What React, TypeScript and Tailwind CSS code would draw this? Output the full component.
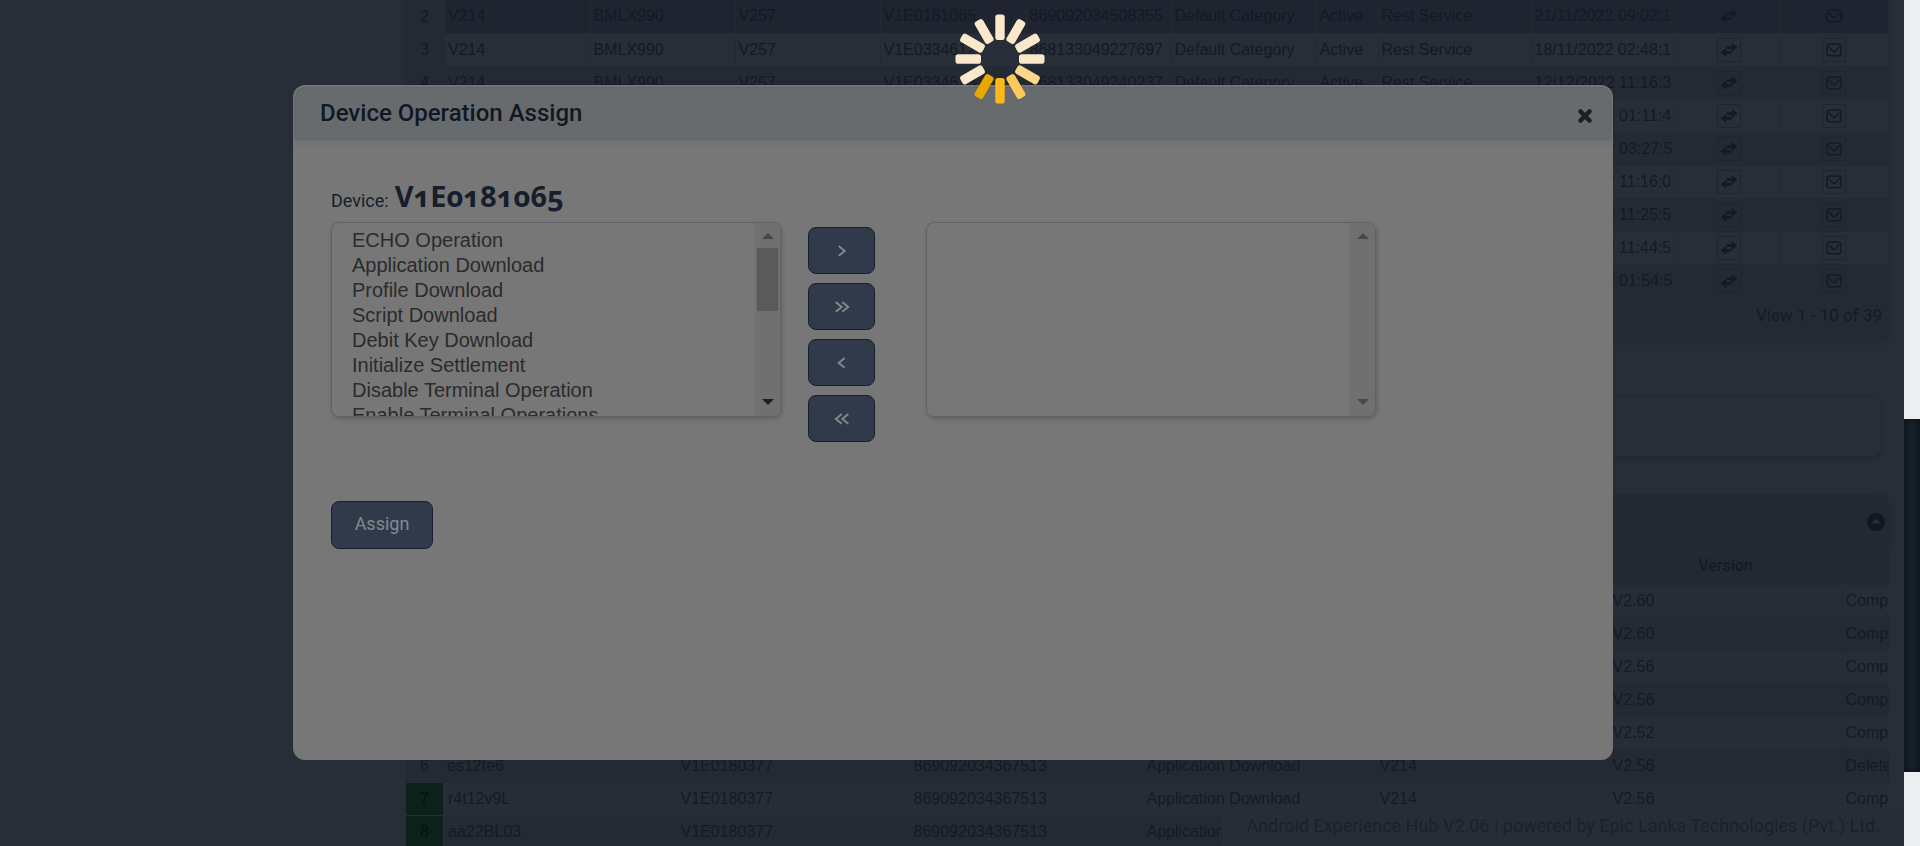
import React from "react";

const deviceRows = [
  { n: 2, imei: "869092034508355", serial: "V1E0181065", date: "21/11/2022 09:02:1", selected: true },
  { n: 3, imei: "868133049227697", serial: "V1E0334612", date: "18/11/2022 02:48:1", selected: false },
  { n: 4, imei: "868133049240237", serial: "V1E0334613", date: "12/12/2022 11:16:3", selected: false },
  { n: 5, imei: "868133049240239", serial: "V1E0334614", date: "12/12/2022 01:11:4", selected: false },
  { n: 6, imei: "868133049240241", serial: "V1E0334615", date: "12/12/2022 03:27:5", selected: false },
  { n: 7, imei: "868133049240243", serial: "V1E0334616", date: "12/12/2022 11:16:0", selected: false },
  { n: 8, imei: "868133049240245", serial: "V1E0334617", date: "12/12/2022 11:25:5", selected: false },
  { n: 9, imei: "868133049240247", serial: "V1E0334618", date: "12/12/2022 11:44:5", selected: false },
  { n: 10, imei: "868133049240249", serial: "V1E0334619", date: "12/12/2022 01:54:5", selected: false },
];

const operationRows = [
  { n: 1, id: "ab10te1", version: "V2.60", status: "Completed" },
  { n: 2, id: "ab11te2", version: "V2.60", status: "Completed" },
  { n: 3, id: "cd12te3", version: "V2.56", status: "Completed" },
  { n: 4, id: "cd12te4", version: "V2.56", status: "Completed" },
  { n: 5, id: "es12te5", version: "V2.52", status: "Completed" },
  { n: 6, id: "es12te6", version: "V2.56", status: "Deleted" },
  { n: 7, id: "r4t12v9L", version: "V2.56", status: "Completed" },
  { n: 8, id: "aa22BL03", version: "V2.56", status: "Completed" },
];

const operations = [
  "ECHO Operation",
  "Application Download",
  "Profile Download",
  "Script Download",
  "Debit Key Download",
  "Initialize Settlement",
  "Disable Terminal Operation",
  "Enable Terminal Operations",
];

function SwapIcon() {
  return (
    <svg viewBox="0 0 18 14" className="h-[14px] w-[18px] shrink-0" fill="currentColor" aria-hidden="true">
      <path d="M6.500 3.200h5.200V.3L17.600 4.600 11.700 9V6H6.500zM11.500 7.900v2.900H6.300v2.900L.4 9.300 6.300 5v2.900z" />
    </svg>
  );
}

function MailIcon() {
  return (
    <svg viewBox="0 0 16 14" className="h-[14px] w-4 shrink-0" fill="none" stroke="currentColor" strokeWidth="1.500" aria-hidden="true">
      <rect x="1" y="1" width="14" height="11.800" rx="2.500" />
      <path d="M2.600 3.400L7 8.200q1 1 2 0l4.400-4.800" />
    </svg>
  );
}

function IconButton({ label, framed, children }: { label: string; framed: boolean; children: React.ReactNode }) {
  return (
    <button
      type="button"
      aria-label={label}
      className={
        framed
          ? "mx-auto flex h-6 w-6 items-center justify-center border border-[#1f2530]"
          : "mx-auto flex h-6 w-6 items-center justify-center"
      }
    >
      {children}
    </button>
  );
}

function DeviceTable() {
  const cell = "overflow-hidden whitespace-nowrap border-r border-b border-[#232a34] px-[3px]";
  return (
    <table className="w-full table-fixed border-collapse text-base leading-6">
      <colgroup>
        <col className="w-[41px]" />
        <col className="w-[145px]" />
        <col className="w-[145px]" />
        <col className="w-[145px]" />
        <col className="w-[146px]" />
        <col className="w-[145px]" />
        <col className="w-[145px]" />
        <col className="w-[62px]" />
        <col className="w-[153px]" />
        <col className="w-[146px]" />
        <col className="w-[103px]" />
        <col />
      </colgroup>
      <tbody>
        {deviceRows.map((r) => (
          <tr
            key={r.n}
            className={r.selected ? "h-[33px] bg-[#1f2430]" : r.n % 2 ? "h-[33px] bg-[#272e37]" : "h-[33px] bg-[#242a34]"}
          >
            <td className="bg-[#242a34] text-center">{r.n}</td>
            <td className={cell}>V214</td>
            <td className={cell}>BMLX990</td>
            <td className={cell}>V257</td>
            <td className={cell}>{r.serial}</td>
            <td className={cell}>{r.imei}</td>
            <td className={cell}>Default Category</td>
            <td className={cell}>Active</td>
            <td className={cell}>Rest Service</td>
            <td className={cell}>{r.date}</td>
            <td className={cell}>
              <IconButton label="Assign operation" framed={!r.selected}>
                <SwapIcon />
              </IconButton>
            </td>
            <td className={cell}>
              <IconButton label="Send message" framed={!r.selected}>
                <MailIcon />
              </IconButton>
            </td>
          </tr>
        ))}
      </tbody>
    </table>
  );
}

function OperationTable() {
  const cell = "overflow-hidden whitespace-nowrap border-r border-b border-[#232a34] px-[3px]";
  return (
    <table className="w-full table-fixed border-collapse text-base leading-6">
      <colgroup>
        <col className="w-[39px]" />
        <col className="w-[233px]" />
        <col className="w-[233px]" />
        <col className="w-[233px]" />
        <col className="w-[233px]" />
        <col className="w-[233px]" />
        <col className="w-[233px]" />
        <col />
      </colgroup>
      <thead className="font-['Roboto',sans-serif]">
        <tr className="h-[38px] bg-[#232933]">
          <th />
          <th className="font-medium">ID</th>
          <th className="font-medium">Serial</th>
          <th className="font-medium">IMEI</th>
          <th className="font-medium">Operation</th>
          <th className="font-medium">Model</th>
          <th className="font-medium">Version</th>
          <th />
        </tr>
      </thead>
      <tbody>
        {operationRows.map((r) => (
          <tr key={r.n} className={r.n % 2 ? "h-[33px] bg-[#272d37]" : "h-[33px] bg-[#242a34]"}>
            <td
              className={
                r.n > 6
                  ? "border-x-2 border-b border-[#272d37] bg-[#0c2119] text-center text-[#06120f]"
                  : "bg-[#242a34] text-center"
              }
            >
              {r.n}
            </td>
            <td className={cell}>{r.id}</td>
            <td className={cell}>V1E0180377</td>
            <td className={cell}>869092034367513</td>
            <td className={cell}>Application Download</td>
            <td className={cell}>V214</td>
            <td className={cell}>{r.version}</td>
            <td className="overflow-hidden whitespace-nowrap border-b border-[#232a34] px-[3px]">{r.status}</td>
          </tr>
        ))}
      </tbody>
    </table>
  );
}

function ListBox({ label, items }: { label: string; items: string[] }) {
  const active = items.length > 0;
  return (
    <div className="flex h-[195px] w-[450px] overflow-hidden rounded-lg border border-[#5c636c] shadow-[1px_2px_4px_rgba(0,0,0,0.2)]">
      <select
        multiple
        aria-label={label}
        className="h-full min-w-0 flex-1 overflow-hidden bg-transparent px-5 py-[6px] text-xl text-[#2b2b2b] outline-none"
      >
        {items.map((o) => (
          <option key={o} className="h-[25px] p-0 leading-[25px]">
            {o}
          </option>
        ))}
      </select>
      <div className="flex w-[25px] flex-col items-center bg-[#707070] pt-[10px] pb-[11px]">
        <svg viewBox="0 0 12 6" className="h-[6px] w-3 fill-[#484848]" aria-hidden="true">
          <path d="M0 6L6 0l6 6z" />
        </svg>
        {active ? <div className="mt-[9px] h-[63px] w-[21px] bg-[#5a5a5a]" /> : null}
        <svg
          viewBox="0 0 12 6"
          className={active ? "mt-auto h-[6px] w-3 fill-[#1f1f1f]" : "mt-auto h-[6px] w-3 fill-[#484848]"}
          aria-hidden="true"
        >
          <path d="M0 0h12L6 6z" />
        </svg>
      </div>
    </div>
  );
}

function MoveButton({ label, d }: { label: string; d: string }) {
  return (
    <button
      type="button"
      aria-label={label}
      className="flex h-[47px] w-[67px] items-center justify-center rounded-lg border border-[#16202e] bg-[#303a4a] text-[#84878b]"
    >
      <svg viewBox="0 0 16 12" className="h-3 w-4" fill="none" stroke="currentColor" strokeWidth="1.900" aria-hidden="true">
        <path d={d} />
      </svg>
    </button>
  );
}

function Modal() {
  return (
    <section
      role="dialog"
      aria-label="Device Operation Assign"
      className="flex h-[675px] w-[1320px] flex-col rounded-xl bg-[#777777] p-[2px] font-['Roboto',sans-serif]"
    >
      <header className="flex h-[52px] items-center justify-between rounded-t-[10px] border border-[#626669] bg-[#676b6e] pr-[17px] pl-6 shadow-[0_2px_6px_rgba(0,0,0,0.15)]">
        <h2 className="text-2xl font-medium text-[#111823]">Device Operation Assign</h2>
        <button type="button" aria-label="Close" className="mt-[6px] text-[#1f1f1f]">
          <svg viewBox="0 0 16 16" className="h-4 w-4" aria-hidden="true">
            <path
              d="M3.400 3.400l9.200 9.200M12.600 3.400l-9.200 9.200"
              stroke="currentColor"
              strokeWidth="4.400"
              strokeLinecap="round"
            />
          </svg>
        </button>
      </header>
      <div className="px-9 pt-[35px]">
        <p className="flex h-12 items-baseline gap-[6px] text-[#161e2b]">
          <span className="text-lg">Device:</span>
          <strong className="font-['Open_Sans',sans-serif] text-[29px] font-bold oldstyle-nums">V1E0181065</strong>
        </p>
        <div className="flex items-start font-['Liberation_Sans',Arial,sans-serif]">
          <ListBox label="Available operations" items={operations} />
          <div className="mr-[51px] ml-[27px] flex flex-col gap-[9px] pt-[5px]">
            <MoveButton label="Add selected" d="M4.700 1l6 4.900-6 4.900" />
            <MoveButton label="Add all" d="M1.700 1l6 4.900-6 4.900M8.200 1l6 4.900-6 4.900" />
            <MoveButton label="Remove selected" d="M10.700 1l-6 4.900 6 4.900" />
            <MoveButton label="Remove all" d="M7.800 1l-6 4.900 6 4.900M14.300 1l-6 4.900 6 4.900" />
          </div>
          <ListBox label="Assigned operations" items={[]} />
        </div>
        <button
          type="button"
          className="mt-[59px] h-12 w-[102px] rounded-lg border border-[#16202e] bg-[#303a4a] pb-[2px] text-lg text-[#85888d]"
        >
          Assign
        </button>
      </div>
    </section>
  );
}

const petals = [
  "#fae8ca", "#fae8ca", "#fae8ca", "#fae8ca", "#fbd68d", "#fcca58",
  "#fdb91b", "#e9a800", "#fae8ca", "#fae8ca", "#fae8ca", "#fae8ca",
];

function Spinner() {
  return (
    <svg viewBox="-46 -46 92 92" className="h-[92px] w-[92px]" role="img" aria-label="Loading">
      {petals.map((c, i) => (
        <rect key={i} x="-4.700" y="-44.500" width="9.400" height="25.500" rx="2.800" fill={c} transform={`rotate(${i * 30})`} />
      ))}
    </svg>
  );
}

export default function App() {
  return (
    <div className="relative flex h-screen overflow-hidden bg-[#ecf0f1] font-['Liberation_Sans',Arial,sans-serif] text-[#131a26]">
      <main className="min-w-0 flex-1 bg-[#272e37] pr-[15px] pl-[404px]">
        <div className="rounded-b-xl bg-[#242a34] shadow-[2px_2px_8px_rgba(0,0,0,0.1)]">
          <DeviceTable />
          <p className="flex h-[43px] items-center justify-end pr-[7px] pb-[6px] font-['Roboto',sans-serif] text-[17px]">
            View 1 - 10 of 39
          </p>
        </div>
        <div className="mt-[54px] mr-[7px] h-[63px] rounded-xl border border-[#222831] shadow-[1px_2px_5px_rgba(0,0,0,0.1)]" />
        <section className="mt-[36px]">
          <header className="flex h-[53px] items-center justify-end rounded-t-xl bg-[#232933] pt-[3px] pr-1 shadow-[2px_2px_8px_rgba(0,0,0,0.1)]">
            <button type="button" aria-label="Collapse">
              <svg viewBox="0 0 18 18" className="h-[18px] w-[18px]" aria-hidden="true">
                <circle cx="9" cy="9" r="9" fill="#111822" />
                <path d="M4 10.300L9 5.800l5 4.500z" fill="#272e37" />
              </svg>
            </button>
          </header>
          <OperationTable />
        </section>
      </main>
      <aside className="w-4 shrink-0 pt-[419px]">
        <div className="h-[353px] bg-[#16222c] shadow-[inset_0_0_8px_#0b0d13]" />
      </aside>
      <footer className="absolute right-4 bottom-0 flex h-9 items-center bg-[#272d37] pr-6 pb-1 pl-6 font-['Roboto',sans-serif] text-lg leading-6 text-[#1a212b]">
        Android Experience Hub V2.06 | powered by Epic Lanka Technologies (Pvt.) Ltd.
      </footer>
      <div className="absolute inset-y-0 right-4 left-0 flex items-start justify-center pt-[85px] pl-[2px]">
        <Modal />
      </div>
      <div className="absolute inset-x-0 top-0 flex justify-center pt-[13px] pl-20">
        <Spinner />
      </div>
    </div>
  );
}
